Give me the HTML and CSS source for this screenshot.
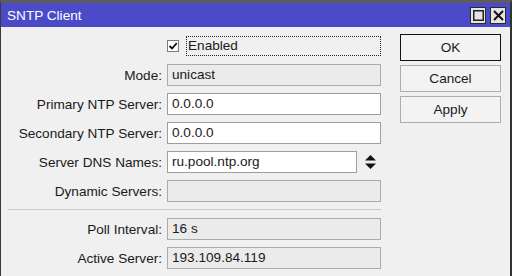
FILE: index.html
```html
<!DOCTYPE html>
<html lang="en">
<head>
<meta charset="UTF-8">
<title>SNTP Client</title>
<link rel="stylesheet" href="styles.css">
</head>
<body>

<div class="window">

<div class="titlebar">
<span class="title">SNTP Client</span>
<div class="title-btns">
<span class="tbtn"><svg width="11" height="11" viewBox="0 0 11 11"><rect x="0.75" y="0.75" width="9.5" height="9.5" fill="none" stroke="#222" stroke-width="1.5"/></svg></span>
<span class="tbtn"><svg width="11" height="11" viewBox="0 0 11 11"><path d="M1 1L10 10M10 1L1 10" stroke="#111" stroke-width="2"/></svg></span>
</div>
</div>

<div class="content">

<div class="form">
<div class="row check-row">
<span class="label"></span>
<span class="checkbox"><svg width="10" height="10" viewBox="0 0 10 10"><path d="M1.5 5L4 7.5L8.8 2.2" fill="none" stroke="#111" stroke-width="1.8"/></svg></span>
<span class="focus">Enabled</span>
</div>

<div class="row">
<span class="label">Mode:</span>
<span class="field readonly">unicast</span>
</div>

<div class="row">
<span class="label">Primary NTP Server:</span>
<span class="field">0.0.0.0</span>
</div>

<div class="row">
<span class="label">Secondary NTP Server:</span>
<span class="field">0.0.0.0</span>
</div>

<div class="row">
<span class="label">Server DNS Names:</span>
<span class="field short">ru.pool.ntp.org</span>
<span class="spinner"><svg width="11" height="14" viewBox="0 0 11 14"><polygon points="0,5.5 5.5,0 11,5.5" fill="#111"/><polygon points="0,8.5 11,8.5 5.5,14" fill="#111"/></svg></span>
</div>

<div class="row">
<span class="label">Dynamic Servers:</span>
<span class="field readonly"></span>
</div>

<div class="separator"></div>

<div class="row">
<span class="label">Poll Interval:</span>
<span class="field readonly">16 s</span>
</div>

<div class="row">
<span class="label">Active Server:</span>
<span class="field readonly">193.109.84.119</span>
</div>
</div>

<div class="buttons">
<button class="default">OK</button>
<button>Cancel</button>
<button>Apply</button>
</div>

</div>

</div>

</body>
</html>
```

FILE: styles.css
```css
/* ---------- GLOBAL ---------- */
*{margin:0;padding:0;box-sizing:border-box;}
body{font-family:"Liberation Sans",Arial,sans-serif;font-size:13.6px;color:#1a1a1a;background:#f0f0f0;}

/* ---------- WINDOW ---------- */
.window{
width:512px;
height:276px;
border-top:3px solid #5c5c5c;
border-left:1px solid #3a3a3a;
border-right:2px solid #333;
background:#f0f0f0;
overflow:hidden;
}
.titlebar{
height:24px;
background:#4b4bc9;
display:flex;
justify-content:space-between;
align-items:center;
padding:0 4px 0 6px;
}
.title{color:#fff;}
.title-btns{display:flex;gap:4px;align-self:flex-start;margin-top:4px;}
.tbtn{
width:16px;height:17px;
background:#e4e4e4;
border:1px solid #2a2a2a;
display:flex;align-items:center;justify-content:center;
}

/* ---------- CONTENT ---------- */
.content{display:flex;}
.form{width:380px;padding-top:9px;}
.row{display:flex;align-items:center;height:22px;margin-bottom:7px;}
.label{width:161px;text-align:right;margin-right:5px;flex-shrink:0;white-space:nowrap;}
.field{
width:214px;height:22px;
background:#fff;
border:1px solid #9e9e9e;
padding:0 4px;
line-height:20px;
white-space:nowrap;
}
.field.readonly{background:#ebebeb;border-color:#ababab;}
.field.short{width:190px;}
.spinner{display:flex;margin-left:8px;}

.check-row{height:20px;margin-bottom:8px;}
.checkbox{
width:12px;height:12px;
background:#fff;
border:1px solid #7a7a7a;
display:flex;align-items:center;justify-content:center;
}
.focus{
margin-left:7px;
width:195px;height:20px;
border:1px dotted #222;
padding-left:1px;
line-height:18px;
}

.separator{
height:1px;
background:#cdcdcd;
margin:3px 0 8px 7px;
}

/* ---------- BUTTONS ---------- */
.buttons{display:flex;flex-direction:column;gap:4px;margin-left:19px;padding-top:7px;}
.buttons button{
width:101px;height:27px;
font-family:inherit;font-size:13.6px;color:#1a1a1a;
background:#f3f3f3;
border:1px solid #adadad;
}
.buttons button.default{border-color:#111;}
```
